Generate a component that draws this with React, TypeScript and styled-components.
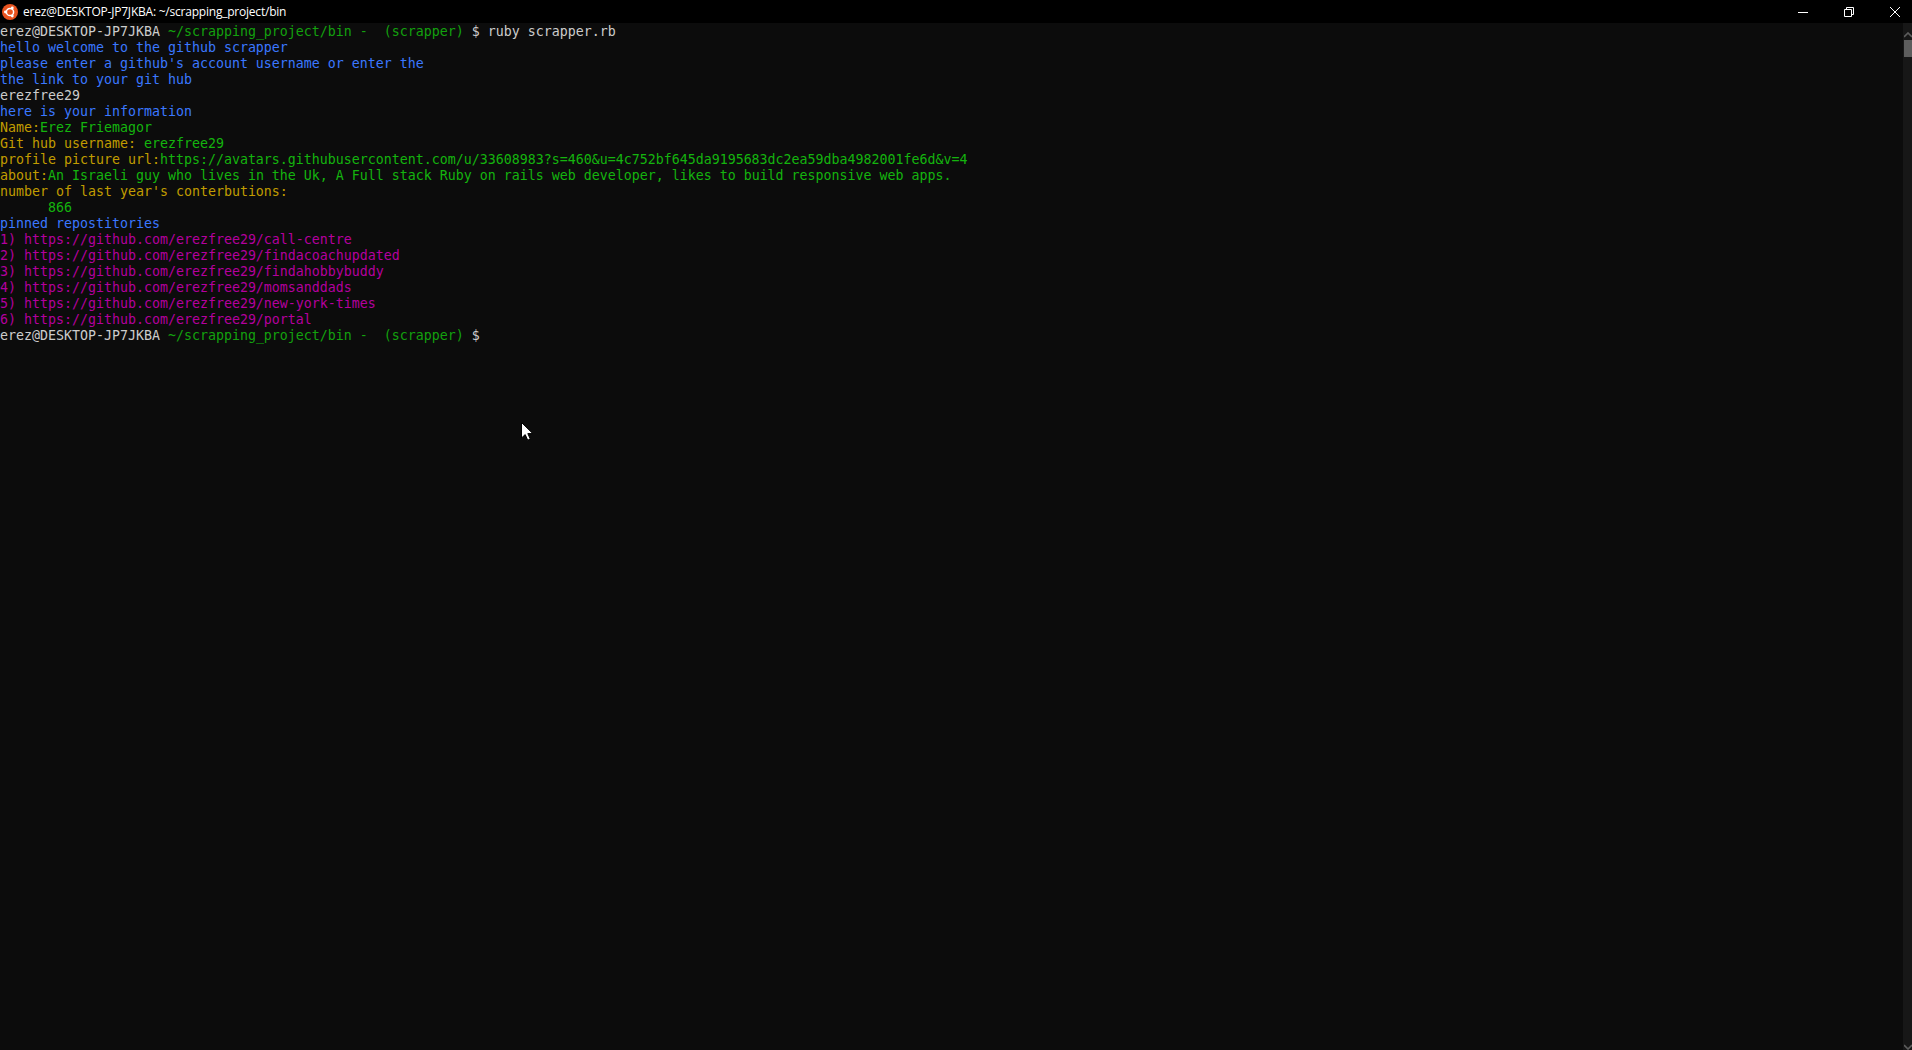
import React from "react";
import styled, { createGlobalStyle } from "styled-components";

const Global = createGlobalStyle`
  html, body { margin: 0; padding: 0; height: 100%; background: #0c0c0c; overflow: hidden; }
  #root { height: 100%; }
`;

const Window = styled.div`
  position: relative;
  display: flex;
  flex-direction: column;
  width: 1912px;
  height: 1050px;
  overflow: hidden;
  background: #0c0c0c;
`;

const TitleBar = styled.header`
  display: flex;
  align-items: center;
  flex: 0 0 23px;
  height: 23px;
  background: #000;
  color: #fff;
  font: 12px/23px "Open Sans", "Noto Sans", sans-serif;
  letter-spacing: -0.22px;
`;

const AppIcon = styled.svg`
  flex: none;
  width: 16px;
  height: 16px;
  margin: 0 5px 0 2px;
`;

const TitleText = styled.span`
  flex: 1;
  white-space: pre;
`;

const Controls = styled.div`
  display: flex;
  margin-right: -6px;
`;

const ControlButton = styled.div`
  display: flex;
  align-items: center;
  justify-content: center;
  width: 46px;
  height: 21px;
`;

const Body = styled.main`
  flex: 1;
  display: flex;
  min-height: 0;
`;

const Console = styled.pre`
  flex: 1;
  margin: 0;
  padding-top: 1px;
  font-family: "DejaVu Sans Mono", "Liberation Mono", monospace;
  font-size: 13.29px;
  line-height: 16px;
  color: #cccccc;
  white-space: pre;
`;

const Line = styled.div`
  height: 16px;
`;

const Seg = styled.span<{ $c: string }>`
  color: ${(p) => p.$c};
`;

const Scrollbar = styled.aside`
  flex: 0 0 9px;
  width: 9px;
  padding: 9px 0 0 1px;
  box-sizing: border-box;
  background: #171717;
  display: flex;
  flex-direction: column;
  align-items: flex-start;
`;

const ScrollUp = styled.svg`
  width: 8px;
  height: 8px;
  flex: none;
`;

const ScrollThumb = styled.div`
  width: 8px;
  height: 17px;
  background: #5d5d5d;
  flex: none;
`;

const ScrollSpacer = styled.div`
  flex: 1;
`;

const Pointer = styled.svg`
  position: absolute;
  left: 521px;
  top: 422px;
  width: 12px;
  height: 19px;
`;

const W = "#cccccc";
const B = "#3b78ff";
const O = "#c19c00";
const G = "#13a10e";
const L = "#14b40e";
const M = "#b4009e";

const prompt: [string, string][] = [
  ["erez@DESKTOP-JP7JKBA ", W],
  ["~/scrapping_project/bin -  (scrapper) ", G],
  ["$ ", W],
];

const lines: [string, string][][] = [
  [...prompt, ["ruby scrapper.rb", W]],
  [["hello welcome to the github scrapper", B]],
  [["please enter a github's account username or enter the", B]],
  [["the link to your git hub", B]],
  [["erezfree29", W]],
  [["here is your information", B]],
  [["Name:", O], ["Erez Friemagor", L]],
  [["Git hub username: ", O], ["erezfree29", L]],
  [["profile picture url:", O], ["https://avatars.githubusercontent.com/u/33608983?s=460&u=4c752bf645da9195683dc2ea59dba4982001fe6d&v=4", L]],
  [["about:", O], ["An Israeli guy who lives in the Uk, A Full stack Ruby on rails web developer, likes to build responsive web apps.", L]],
  [["number of last year's conterbutions:", O]],
  [["      866", L]],
  [["pinned repostitories", B]],
  [["1) https://github.com/erezfree29/call-centre", M]],
  [["2) https://github.com/erezfree29/findacoachupdated", M]],
  [["3) https://github.com/erezfree29/findahobbybuddy", M]],
  [["4) https://github.com/erezfree29/momsanddads", M]],
  [["5) https://github.com/erezfree29/new-york-times", M]],
  [["6) https://github.com/erezfree29/portal", M]],
  prompt,
];

export default function App() {
  return (
    <Window>
      <Global />
      <TitleBar>
        <AppIcon viewBox="0 0 16 16">
          <circle cx="8" cy="8" r="8" fill="#e95420" />
          <circle cx="8" cy="8" r="3.6" fill="none" stroke="#fff" strokeWidth="1.5" />
          <circle cx="3.4" cy="8" r="1.4" fill="#fff" />
          <circle cx="10.3" cy="4" r="1.4" fill="#fff" />
          <circle cx="10.3" cy="12" r="1.4" fill="#fff" />
        </AppIcon>
        <TitleText>erez@DESKTOP-JP7JKBA: ~/scrapping_project/bin</TitleText>
        <Controls>
          <ControlButton>
            <svg width="10" height="10" viewBox="0 0 10 10">
              <path d="M0 5.5h10" stroke="#fff" strokeWidth="1" />
            </svg>
          </ControlButton>
          <ControlButton>
            <svg width="10" height="10" viewBox="0 0 10 10">
              <path d="M.5 2.5h7v7h-7z M2.5 2.5v-2h7v7h-2" fill="none" stroke="#fff" strokeWidth="1" />
            </svg>
          </ControlButton>
          <ControlButton>
            <svg width="10" height="10" viewBox="0 0 10 10">
              <path d="M0 0l10 10M10 0L0 10" stroke="#fff" strokeWidth="1" />
            </svg>
          </ControlButton>
        </Controls>
      </TitleBar>
      <Body>
        <Console>
          {lines.map((segs, i) => (
            <Line key={i}>
              {segs.map(([t, c], j) => (
                <Seg key={j} $c={c}>
                  {t}
                </Seg>
              ))}
            </Line>
          ))}
        </Console>
        <Scrollbar>
          <ScrollUp viewBox="0 0 8 8">
            <path d="M0 5l4-4 4 4" fill="none" stroke="#5d5d5d" strokeWidth="1.6" />
          </ScrollUp>
          <ScrollThumb />
          <ScrollSpacer />
          <ScrollUp viewBox="0 0 8 8">
            <path d="M0 3l4 4 4-4" fill="none" stroke="#5d5d5d" strokeWidth="1.6" />
          </ScrollUp>
        </Scrollbar>
      </Body>
      <Pointer viewBox="0 0 12 19">
        <path d="M.5.5v15.5l3.7-3.4 2.5 5.6 2.6-1.1-2.5-5.5h5z" fill="#fff" stroke="#000" strokeWidth="1" />
      </Pointer>
    </Window>
  );
}
